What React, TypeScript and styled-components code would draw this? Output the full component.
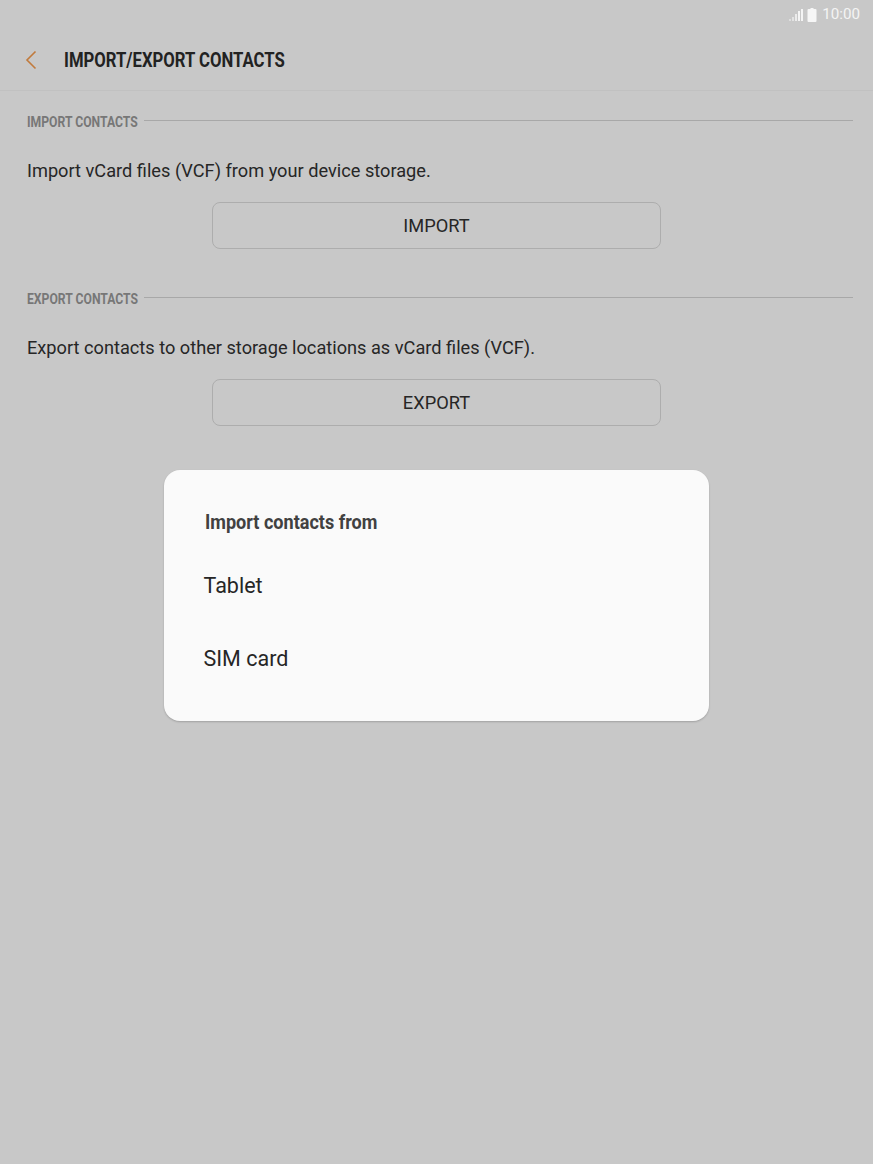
import styled, { createGlobalStyle } from "styled-components";

const GlobalStyle = createGlobalStyle`
  html, body {
    margin: 0;
    padding: 0;
    background: #c8c8c8;
    font-family: Roboto, "Liberation Sans", sans-serif;
  }
`;

const Screen = styled.div`
  position: relative;
  width: 873px;
  height: 1164px;
  overflow: hidden;
  background: #c8c8c8;
`;

const StatusBar = styled.div`
  height: 28px;
  padding: 1px 13px 0 0;
  display: flex;
  justify-content: flex-end;
  align-items: center;
  gap: 3px;
  color: #f4f4f4;
  font-size: 15.2px;
  box-sizing: border-box;
`;

const Clock = styled.span`
  margin-left: 2px;
  line-height: 27px;
`;

const Header = styled.header`
  height: 63px;
  padding: 2px 0 0 25px;
  display: flex;
  align-items: center;
  gap: 27px;
  border-bottom: 1px solid #c1c1c1;
  box-sizing: border-box;
`;

const Title = styled.h1`
  margin: 0;
  font-size: 20px;
  font-weight: 700;
  color: #222;
  white-space: nowrap;
  transform: scaleX(0.835);
  transform-origin: left center;
`;

const Section = styled.section<{ $top: number }>`
  padding: ${(p) => p.$top}px 20px 0 27px;
`;

const SectionHead = styled.div`
  display: flex;
  align-items: center;
  height: 14px;
`;

const SectionLabel = styled.span<{ $width: number }>`
  flex: none;
  width: ${(p) => p.$width}px;
  margin-right: 6px;
  padding-top: 4px;
  font-size: 14px;
  font-weight: 700;
  color: #777;
  white-space: nowrap;
  transform: scaleX(0.87);
  transform-origin: left center;
`;

const Rule = styled.div`
  flex: 1;
  height: 1px;
  background: #a8a8a8;
`;

const Description = styled.p`
  margin: 32px 0 0;
  font-size: 18.2px;
  line-height: 24px;
  color: #262626;
`;

const ButtonRow = styled.div`
  margin-top: 19px;
  padding-left: 185px;
`;

const OutlineButton = styled.button`
  display: block;
  width: 449px;
  height: 47px;
  padding: 0;
  background: transparent;
  border: 1px solid #adadad;
  border-radius: 8px;
  font-family: inherit;
  font-size: 18.25px;
  color: #262626;
`;

const Dialog = styled.div`
  position: absolute;
  left: 164px;
  top: 470px;
  width: 545px;
  height: 251px;
  background: #fafafa;
  border-radius: 16px;
  box-shadow: 0 1px 2px rgba(0, 0, 0, 0.2);
  box-sizing: border-box;
  padding: 39px 40px 0;
`;

const DialogTitle = styled.h2`
  margin: 0 0 0 1px;
  height: 26px;
  line-height: 26px;
  font-size: 21px;
  font-weight: 700;
  color: #414141;
  white-space: nowrap;
  transform: scaleX(0.86);
  transform-origin: left center;
`;

const DialogOption = styled.div`
  height: 73px;
  line-height: 73px;
  font-size: 21.5px;
  color: #262626;
  margin-left: -0.5px;
  &:first-of-type {
    margin-top: 14px;
  }
`;

function StatusIcons() {
  return (
    <>
      <svg width="15" height="14" viewBox="0 0 15 14" aria-hidden="true">
        <rect x="0" y="11" width="2" height="2" fill="#f4f4f4" opacity="0.5" />
        <rect x="3" y="9" width="2" height="4" fill="#f4f4f4" opacity="0.6" />
        <rect x="6" y="6" width="2" height="7" fill="#f4f4f4" opacity="0.8" />
        <rect x="9" y="3" width="2" height="10" fill="#f4f4f4" />
        <rect x="12" y="1" width="2" height="12" fill="#f4f4f4" />
      </svg>
      <svg width="10" height="14" viewBox="0 0 10 14" aria-hidden="true">
        <path d="M3.5 0h3v1h2a1 1 0 0 1 1 1v11a1 1 0 0 1-1 1h-7a1 1 0 0 1-1-1V2a1 1 0 0 1 1-1h2z" fill="#f6f6f6" />
      </svg>
    </>
  );
}

function BackIcon() {
  return (
    <svg width="12" height="20" viewBox="0 0 12 20" aria-hidden="true">
      <path d="M10.5 1.5 2 10l8.5 8.5" fill="none" stroke="#c17a3c" strokeWidth="1.6" />
    </svg>
  );
}

export default function App() {
  return (
    <Screen>
      <GlobalStyle />
      <StatusBar>
        <StatusIcons />
        <Clock>10:00</Clock>
      </StatusBar>
      <Header>
        <BackIcon />
        <Title>IMPORT/EXPORT CONTACTS</Title>
      </Header>
      <Section $top={22}>
        <SectionHead>
          <SectionLabel $width={111}>IMPORT CONTACTS</SectionLabel>
          <Rule />
        </SectionHead>
        <Description>Import vCard files (VCF) from your device storage.</Description>
        <ButtonRow>
          <OutlineButton>IMPORT</OutlineButton>
        </ButtonRow>
      </Section>
      <Section $top={41}>
        <SectionHead>
          <SectionLabel $width={111}>EXPORT CONTACTS</SectionLabel>
          <Rule />
        </SectionHead>
        <Description>Export contacts to other storage locations as vCard files (VCF).</Description>
        <ButtonRow>
          <OutlineButton>EXPORT</OutlineButton>
        </ButtonRow>
      </Section>
      <Dialog>
        <DialogTitle>Import contacts from</DialogTitle>
        <DialogOption>Tablet</DialogOption>
        <DialogOption>SIM card</DialogOption>
      </Dialog>
    </Screen>
  );
}
